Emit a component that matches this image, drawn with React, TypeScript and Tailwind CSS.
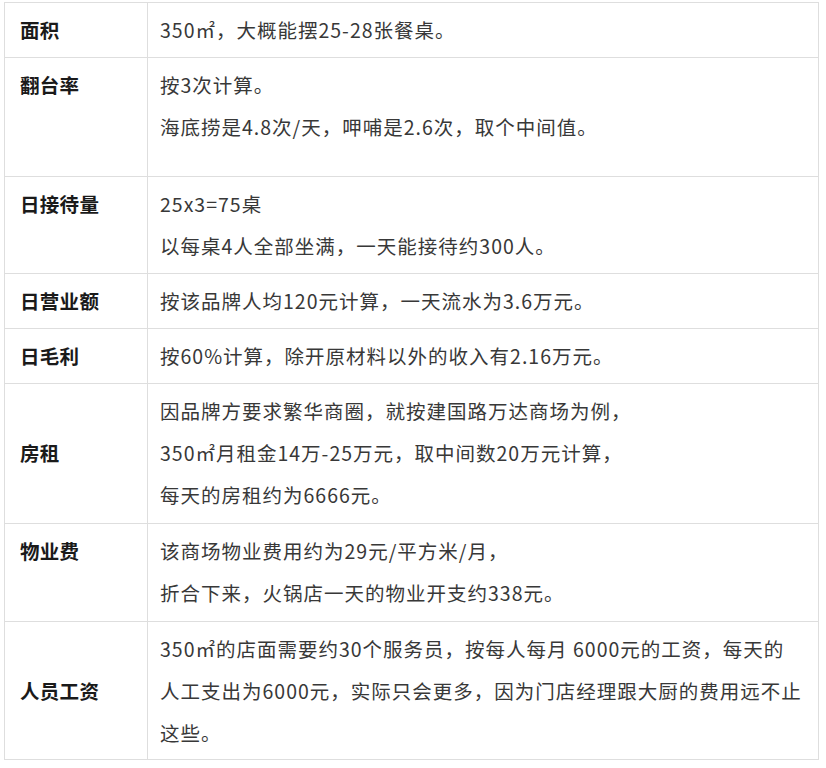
import type { ReactNode } from 'react';

type Row = {
  label: string;
  lines: string[];
  align: 'top' | 'middle';
  pad?: string;
  extra?: boolean;
};

const rows: Row[] = [
  { label: '面积', lines: ['350㎡，大概能摆25-28张餐桌。'], align: 'top' },
  {
    label: '翻台率',
    lines: ['按3次计算。', '海底捞是4.8次/天，呷哺是2.6次，取个中间值。'],
    align: 'top',
    extra: true
  },
  { label: '日接待量', lines: ['25x3=75桌', '以每桌4人全部坐满，一天能接待约300人。'], align: 'top' },
  { label: '日营业额', lines: ['按该品牌人均120元计算，一天流水为3.6万元。'], align: 'top' },
  { label: '日毛利', lines: ['按60%计算，除开原材料以外的收入有2.16万元。'], align: 'top' },
  {
    label: '房租',
    lines: [
      '因品牌方要求繁华商圈，就按建国路万达商场为例，',
      '350㎡月租金14万-25万元，取中间数20万元计算，',
      '每天的房租约为6666元。'
    ],
    align: 'middle',
    pad: 'pb-[7px]'
  },
  {
    label: '物业费',
    lines: ['该商场物业费用约为29元/平方米/月，', '折合下来，火锅店一天的物业开支约338元。'],
    align: 'top',
    pad: 'pb-[7px]'
  },
  {
    label: '人员工资',
    lines: [
      '350㎡的店面需要约30个服务员，按每人每月 6000元的工资，每天的',
      '人工支出为6000元，实际只会更多，因为门店经理跟大厨的费用远不止',
      '这些。'
    ],
    align: 'middle',
    pad: 'pb-[5px]'
  }
];

function Cell({ children, className }: { children: ReactNode; className: string }) {
  return <td className={`border-[1.5px] border-[#dedede] pt-[6px] ${className}`}>{children}</td>;
}

export default function App() {
  return (
    <div className="min-h-screen bg-white pl-[4px] pt-[2px] font-['Noto_Sans_CJK_SC','Noto_Sans',sans-serif]">
      <table className="w-[815px] border-collapse text-[19.5px] leading-[42px] tracking-[1px]">
        <tbody>
          {rows.map((row) => (
            <tr key={row.label}>
              <Cell
                className={`w-[143px] pl-[15px] font-bold tracking-[0.3px] text-[#1a1a1a] ${
                  row.pad ?? 'pb-[6px]'
                } ${row.align === 'top' ? 'align-top' : 'align-middle'}`}
              >
                {row.label}
              </Cell>
              <Cell className={`pl-[12px] pr-[4px] align-top text-[#383838] ${row.pad ?? 'pb-[6px]'}`}>
                {row.lines.map((line) => (
                  <p key={line} className="whitespace-nowrap">
                    {line}
                  </p>
                ))}
                {row.extra && <div className="h-[22px]" />}
              </Cell>
            </tr>
          ))}
        </tbody>
      </table>
    </div>
  );
}
